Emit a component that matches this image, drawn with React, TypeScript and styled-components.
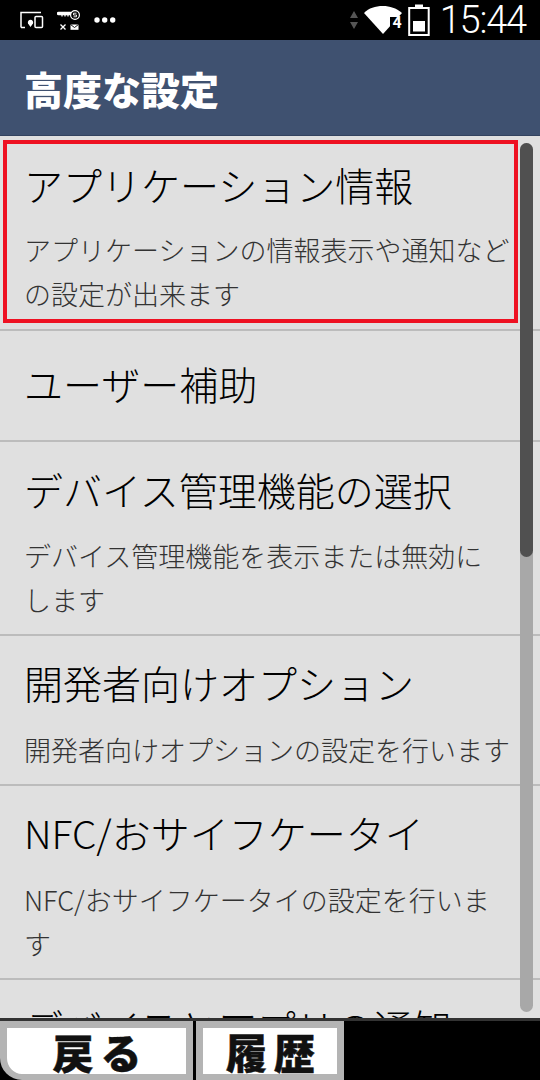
import React from 'react';
import styled, { createGlobalStyle } from 'styled-components';

const GlobalStyle = createGlobalStyle`
  html, body {
    margin: 0;
    padding: 0;
    background: #000;
  }
`;

const Screen = styled.div`
  position: relative;
  width: 540px;
  height: 1080px;
  overflow: hidden;
  display: flex;
  flex-direction: column;
  background: #e0e0e0;
  font-family: "Noto Sans CJK JP", "Noto Sans", sans-serif;
`;

const StatusBar = styled.div`
  height: 40px;
  flex: none;
  background: #000;
  display: flex;
  align-items: center;
  justify-content: space-between;
  padding: 0 14px 0 20px;
  color: #fff;
`;

const StatusGroup = styled.div<{ $gap: number }>`
  display: flex;
  align-items: center;
  gap: ${(p) => p.$gap}px;
`;

const Clock = styled.span`
  font-family: "Roboto", sans-serif;
  font-weight: 300;
  font-size: 38px;
  line-height: 40px;
  letter-spacing: -1.2px;
  margin-left: 4px;
`;

const WifiWrap = styled.div`
  position: relative;
  width: 38px;
  height: 28px;
`;

const WifiBadge = styled.span`
  position: absolute;
  right: 0;
  bottom: 3px;
  font-family: "Roboto", sans-serif;
  font-size: 16px;
  font-weight: 700;
  line-height: 16px;
  color: #fff;
`;

const TitleBar = styled.div`
  height: 96px;
  flex: none;
  background: #3f5170;
  display: flex;
  align-items: center;
  padding-left: 24px;
  box-sizing: border-box;
  border-bottom: 1px solid #33435f;
`;

const Title = styled.h1`
  margin: 0;
  color: #fff;
  font-size: 39px;
  font-weight: 900;
  line-height: 46px;
`;

const List = styled.div`
  flex: 1;
  min-height: 0;
  overflow: hidden;
`;

const Row = styled.div<{ $height: number }>`
  position: relative;
  height: ${(p) => p.$height}px;
  box-sizing: border-box;
  border-bottom: 2px solid #bcbcbc;
  padding: 0 24px;
`;

const Highlight = styled.div`
  position: absolute;
  left: 3px;
  top: 4px;
  width: 515px;
  height: 183px;
  box-sizing: border-box;
  border: 4px solid #ee1122;
`;

const RowTitle = styled.div<{ $pad: number }>`
  font-size: 39px;
  font-weight: 300;
  line-height: 50px;
  padding-top: ${(p) => p.$pad}px;
  color: #000;
  white-space: nowrap;
`;

const RowText = styled.div<{ $gap: number }>`
  font-size: 27px;
  font-weight: 300;
  line-height: 44px;
  margin-top: ${(p) => p.$gap}px;
  color: #333;
  width: 492px;
  white-space: pre;
`;

const Scrollbar = styled.div`
  position: absolute;
  left: 520px;
  top: 143px;
  width: 13px;
  height: 869px;
  background: #a8a8a8;
  border-radius: 7px;
`;

const ScrollThumb = styled.div`
  height: 414px;
  background: #505050;
  border-radius: 7px;
`;

const BottomBar = styled.div`
  flex: none;
  height: 62px;
  background: #000;
  display: flex;
  align-items: stretch;
  border-top: 3px solid #333;
  box-sizing: border-box;
`;

const SoftKey = styled.div<{ $width: number; $first?: boolean }>`
  width: ${(p) => p.$width}px;
  box-sizing: border-box;
  background: #fff;
  border: solid #b4b4b4;
  border-width: 7px 7px 6px 7px;
  margin-right: ${(p) => (p.$first ? 3 : 0)}px;
  border-radius: ${(p) => (p.$first ? '0 0 0 22px' : '0')};
  display: flex;
  align-items: center;
  justify-content: center;
  padding-left: 8px;
  font-size: 41px;
  font-weight: 900;
  letter-spacing: 7px;
  color: #111;
  line-height: 46px;
  -webkit-text-stroke: 0.5px #111;
`;

type Item = { title: string; lines?: string; height: number; pad: number; gap?: number };

const items: Item[] = [
  { title: 'アプリケーション情報', lines: 'アプリケーションの情報表示や通知など\nの設定が出来ます', height: 195, pad: 23, gap: 19 },
  { title: 'ユーザー補助', height: 111, pad: 27 },
  { title: 'デバイス管理機能の選択', lines: 'デバイス管理機能を表示または無効に\nします', height: 194, pad: 22, gap: 20 },
  { title: '開発者向けオプション', lines: '開発者向けオプションの設定を行います', height: 150, pad: 21, gap: 21 },
  { title: 'NFC/おサイフケータイ', lines: 'NFC/おサイフケータイの設定を行いま\nす', height: 194, pad: 21, gap: 21 },
  { title: 'デバイスとアプリの通知', height: 111, pad: 21 },
];

function SyncIcon() {
  return (
    <svg width="24" height="18" viewBox="0 0 24 18" fill="none" stroke="#fff" strokeWidth="1.5">
      <path d="M1 16.500V1.500h20" />
      <path d="M1 16.500h4" />
      <rect x="15" y="5.500" width="7.500" height="11" rx="1" />
      <path d="M8 12.500a2.700 2.700 0 1 1 5 0l-2.500 3.500z" fill="#fff" stroke="none" />
    </svg>
  );
}

function KeyIcon() {
  return (
    <svg width="24" height="20" viewBox="0 0 24 20" fill="none">
      <path d="M1.500 3.500h12" stroke="#fff" strokeWidth="3.400" strokeLinecap="round" />
      <path d="M5 5v1.500M8 5v1.500M11 5v1.500" stroke="#fff" strokeWidth="1.300" />
      <circle cx="18" cy="5" r="4.400" fill="#000" stroke="#fff" strokeWidth="1.200" />
      <path d="M19.500 3.200h-3v1.800h3v1.800h-3" stroke="#fff" strokeWidth="0.900" />
      <path d="M3.500 14.500l5 5M8.500 14.500l-5 5" stroke="#fff" strokeWidth="1.300" />
      <rect x="13.500" y="14.500" width="8" height="5.300" fill="#fff" />
      <path d="M13.500 14.500l4 3 4-3" stroke="#000" strokeWidth="0.900" />
    </svg>
  );
}

function MoreIcon() {
  return (
    <svg width="22" height="6" viewBox="0 0 22 6" fill="#fff">
      <circle cx="3" cy="3" r="2.700" />
      <circle cx="10.700" cy="3" r="2.700" />
      <circle cx="18.700" cy="3" r="2.700" />
    </svg>
  );
}

function DataArrows() {
  return (
    <svg width="8" height="18" viewBox="0 0 8 18" fill="#555">
      <path d="M4 0l4 7H0zM0 11h8l-4 7z" />
    </svg>
  );
}

function WifiIcon() {
  return (
    <WifiWrap>
      <svg width="38" height="28" viewBox="0 0 38 28">
        <path d="M0 7C5 2 11 0 19 0c7 0 13 2 19 7L19 28z" fill="#fff" />
        <rect x="26" y="11" width="12" height="17" fill="#000" />
      </svg>
      <WifiBadge>4</WifiBadge>
    </WifiWrap>
  );
}

function BatteryIcon() {
  return (
    <svg width="22" height="32" viewBox="0 0 22 32" fill="none">
      <path d="M7 0.500h8v3H7z" fill="#fff" />
      <rect x="1.200" y="4" width="19.500" height="27" stroke="#fff" strokeWidth="2" />
      <rect x="5" y="17" width="12" height="10.500" fill="#fff" />
    </svg>
  );
}

export default function App() {
  return (
    <Screen>
      <GlobalStyle />
      <StatusBar>
        <StatusGroup $gap={13}>
          <SyncIcon />
          <KeyIcon />
          <MoreIcon />
        </StatusGroup>
        <StatusGroup $gap={6}>
          <DataArrows />
          <WifiIcon />
          <BatteryIcon />
          <Clock>15:44</Clock>
        </StatusGroup>
      </StatusBar>
      <TitleBar>
        <Title>高度な設定</Title>
      </TitleBar>
      <List>
        {items.map((item, i) => (
          <Row key={item.title} $height={item.height}>
            {i === 0 && <Highlight />}
            <RowTitle $pad={item.pad}>{item.title}</RowTitle>
            {item.lines && <RowText $gap={item.gap ?? 0}>{item.lines}</RowText>}
          </Row>
        ))}
      </List>
      <Scrollbar>
        <ScrollThumb />
      </Scrollbar>
      <BottomBar>
        <SoftKey $width={193} $first>戻る</SoftKey>
        <SoftKey $width={148}>履歴</SoftKey>
      </BottomBar>
    </Screen>
  );
}
